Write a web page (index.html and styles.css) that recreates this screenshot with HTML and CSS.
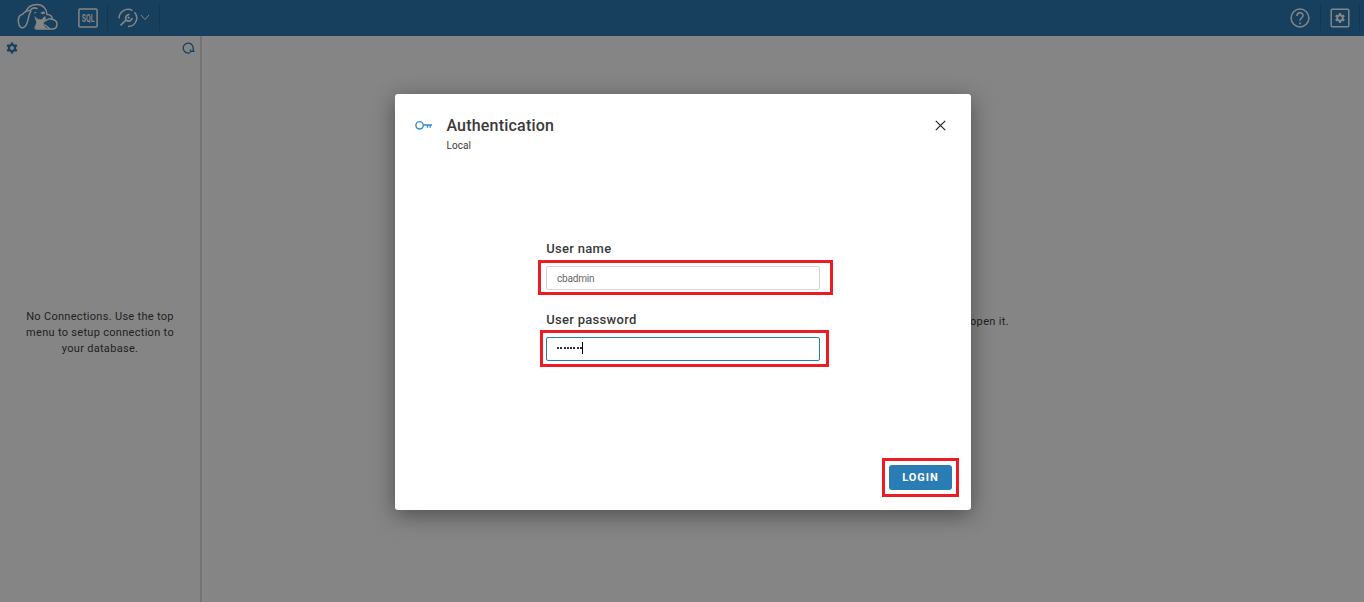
FILE: index.html
```html
<!DOCTYPE html>
<html lang="en">
<head>
<meta charset="utf-8">
<title>Authentication</title>
<link rel="stylesheet" href="styles.css">
</head>
<body>
<div class="app">
  <header class="topbar">
    <svg class="logo" width="42" height="28" viewBox="0 0 42 28" fill="none" stroke="currentColor" stroke-width="1.500" stroke-linecap="round" stroke-linejoin="round">
      <path d="M13 7.500C7.500 8 6.500 10 6 11C2 12 1 16 1.500 19.500C2 24 5 26.500 8 23.500C12 19 11 11 14 8.500"/>
      <path d="M9 8.500C11 3.500 15 1.500 20 1.500C26 1.500 30 6 30 11.500C34 11.500 35.500 14 35 16.500"/>
      <path d="M13 7.500C15 5 18 4.500 20 5.500M27 18C30 18.500 30 15 34 16C37.500 16.500 40 18 40 21C40 24 38 26 35 26H19M28 22L32 25"/>
      <path d="M18 14C18 16.500 20 18 19.500 20L17.500 25.500H30C27 24 26 21 27 18.500C29 18 29 15 28 13.500L26 15C26 17 22 18 18 14Z" fill="currentColor" stroke-width=".6"/>
      <path d="M24 9.500Q27 8 28 9.500Q28 11.500 25 11Z" fill="currentColor" stroke-width=".5"/>
      <path d="M17.500 10L19 9.500" stroke-width="1"/>
    </svg>
    <svg class="sql" width="20" height="20" viewBox="0 0 20 20" fill="none" stroke="currentColor">
      <rect x=".9" y=".9" width="18.200" height="18.200" rx="1" stroke-width="1.500"/>
      <text class="sql-text" x="3.800" y="13.600" textLength="12.600" lengthAdjust="spacingAndGlyphs">SQL</text>
    </svg>
    <i class="sep sep-a"></i>
    <svg class="driver" width="20" height="20" viewBox="0 0 20 20" fill="none" stroke="currentColor" stroke-width="1.500">
      <path d="M1.200 10.500C.5 4 8-1 14.500 2.600M16.500 4.200C21.500 10 17.500 18.500 10 18.500"/>
      <path d="M2.500 17.300L8 12C6.800 9 8.500 6.500 11.500 6.300M8.500 12.300C10.500 13.800 13.500 13 14.200 10M9.800 8.800L11.500 10.400" stroke-width="1.700"/>
    </svg>
    <svg class="chevron" width="10" height="7" viewBox="0 0 10 7" fill="none" stroke="currentColor"><path d="M1 1L5 5.500L9 1"/></svg>
    <i class="sep sep-b"></i>
    <svg class="help" width="20" height="20" viewBox="0 0 20 20" fill="none" stroke="currentColor" stroke-width="1.500">
      <circle cx="10" cy="10" r="8.900"/><path d="M7 8C7 3.700 13 3.700 13 7.500C13 10 10 10 10 12.700"/><path d="M10 14.500V16.200" stroke-width="1.700"/>
    </svg>
    <i class="sep sep-c"></i>
    <svg class="settings" width="20" height="20" viewBox="0 0 20 20" fill="none" stroke="currentColor">
      <rect x="1.200" y="1.200" width="17.600" height="17.600" rx="1" stroke-width="1.500"/>
      <circle cx="10" cy="10" r="2.800" stroke-width="2"/>
      <path d="M10 5V7M10 13V15M5.700 7.500L7.400 8.500M12.600 11.500L14.300 12.500M5.700 12.500L7.400 11.500M12.600 8.500L14.300 7.500" stroke-width="2.200"/>
    </svg>
    <i class="sep sep-d"></i>
  </header>
  <div class="workspace">
    <aside class="sidebar">
      <div class="tools">
        <svg width="12" height="12" viewBox="0 0 12 12" fill="none" stroke="currentColor">
          <circle cx="6" cy="6" r="3" stroke-width="2.200"/>
          <path d="M6 .5V3M6 9V11.500M1.200 3.200L3.400 4.500M8.600 7.500L10.800 8.800M1.200 8.800L3.400 7.500M8.600 4.500L10.800 3.200" stroke-width="2.500"/>
        </svg>
        <svg width="13" height="12" viewBox="0 0 13 12" fill="none" stroke="currentColor" stroke-width="1.300"><path d="M8.500 10.500A5 5 0 1 1 11.200 6V9M8.500 7.500V9.300H12.700"/></svg>
      </div>
      <p class="empty">No Connections. Use the top<br>menu to setup connection to<br>your database.</p>
    </aside>
    <main class="content"><span>open it.</span></main>
  </div>
</div>

<section class="dialog" role="dialog">
  <div class="dialog-head">
    <svg class="key" width="18" height="10" viewBox="0 0 18 10" fill="none" stroke="currentColor" stroke-width="1.400"><circle cx="4.600" cy="5.300" r="3.700"/><path d="M8.300 5H17M12.500 5V7.800M15.200 5V7.800"/></svg>
    <div class="heading"><h1>Authentication</h1><div class="subtitle">Local</div></div>
    <svg class="close" width="11" height="11" viewBox="0 0 11 11" fill="none" stroke="currentColor" stroke-width="1.200"><path d="M.8.8L10.200 10.200M10.200.8L.8 10.200"/></svg>
  </div>
  <div class="form">
    <label>User name</label>
    <div class="mark mark-name"><div class="field">cbadmin</div></div>
    <label class="label-pass">User password</label>
    <div class="mark mark-pass"><div class="field focused"><span class="dots"><i></i><i></i><i></i><i></i><i></i><i></i><i></i><i></i></span><span class="caret"></span></div></div>
  </div>
  <div class="mark mark-login"><button class="login">LOGIN</button></div>
</section>
</body>
</html>
```
FILE: styles.css
```css
* { box-sizing: border-box; }
body { margin: 0; height: 602px; overflow: hidden; font-family: Roboto, sans-serif; color: #1f1f1f; }
svg { display: block; flex: none; }
.app { height: 602px; display: flex; flex-direction: column; background: #858585; }
.topbar { height: 36px; flex: none; display: flex; align-items: center; padding-bottom: 1px; background: #16405e; color: #858585; }
.logo { margin-left: 17px; margin-top: -1px; }
.sql { margin-left: 19px; overflow: visible; }
.sql-text { font: 700 10px Roboto, sans-serif; fill: currentColor; stroke: none; }
.sep { width: 1px; height: 27px; background: #123851; flex: none; }
.sep-a { margin-left: 9px; }
.driver { margin-left: 10px; }
.chevron { margin-left: 2px; }
.sep-b { margin-left: 9px; }
.help { margin-left: auto; }
.sep-c { margin-left: 10px; }
.settings { margin-left: 9px; }
.sep-d { margin-left: 9px; margin-right: 4px; }
.workspace { flex: 1; display: flex; }
.sidebar { width: 202px; border-right: 2px solid #737373; display: flex; flex-direction: column; }
.tools { display: flex; justify-content: space-between; padding: 5.500px 5px 0; color: #16405e; }
.tools svg:first-child { margin-left: .5px; }
.empty { margin: 255.500px 0 0; text-align: center; font-size: 11px; line-height: 16px; letter-spacing: .3px; }
.content { flex: 1; padding: 278px 0 0 768px; font-size: 11px; line-height: 16px; letter-spacing: .35px; }
.dialog { position: absolute; left: 395px; top: 94px; width: 576px; height: 416px; background: #fff; border-radius: 3px; box-shadow: 0 5px 22px rgba(0,0,0,.42); display: flex; flex-direction: column; color: #3a3a3a; }
.dialog-head { height: 142px; padding: 20px 25px 0 20px; display: flex; align-items: flex-start; }
.key { color: #338ecc; margin-top: 6px; }
.heading { margin-left: 13.400px; flex: 1; }
h1 { margin: 0; font-size: 16px; line-height: 24px; font-weight: 500; letter-spacing: .2px; }
.subtitle { margin-top: 1px; font-size: 10px; line-height: 14px; letter-spacing: .1px; }
.close { margin-top: 6px; color: #222; }
.form { flex: 1; display: flex; flex-direction: column; align-items: flex-start; padding-left: 143px; }
label { margin: 5px 0 3px 8.200px; font-size: 13px; line-height: 16px; font-weight: 500; letter-spacing: .3px; }
.label-pass { margin-top: 17px; margin-bottom: 2px; }
.mark { border: 3px solid #ed1c24; flex: none; }
.mark-name { width: 295px; height: 35px; padding: 3px 5px; }
.mark-pass { width: 289px; height: 37px; margin-left: 2px; padding: 4px 3px; }
.field { width: 274px; height: 24px; border: 1px solid #d4d4d4; border-radius: 2px; padding-left: 10px; display: flex; align-items: center; font-size: 10px; letter-spacing: -.2px; color: #666; }
.focused { border-color: #2a7cb4; padding-bottom: 2px; }
.dots { display: flex; gap: 1.300px; }
.dots i { width: 2px; height: 2px; border-radius: .5px; background: #222; }
.caret { width: 1px; height: 12px; background: #000; }
.mark-login { align-self: flex-end; width: 77px; height: 39px; margin: 0 12px 13px 0; padding: 4px; }
.login { display: block; width: 63px; height: 25px; padding: 0; border: 0; border-radius: 3px; background: #2a7cb4; color: #fff; font: 700 11px Roboto, sans-serif; letter-spacing: 1px; }
```
